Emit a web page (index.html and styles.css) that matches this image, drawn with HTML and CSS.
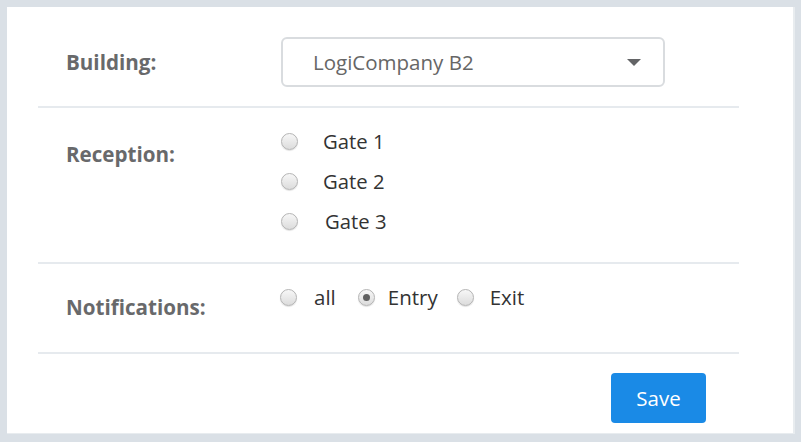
FILE: index.html
```html
<!DOCTYPE html>
<html>
<head>
<meta charset="utf-8">
<link rel="stylesheet" href="styles.css">
</head>
<body>
<div class="panel">
  <form class="form">
    <div class="row row-building">
      <div class="label">Building:</div>
      <div class="control">
        <div class="select">
          <span class="select-text">LogiCompany B2</span>
          <span class="caret"></span>
        </div>
      </div>
    </div>
    <div class="row row-reception">
      <div class="label">Reception:</div>
      <div class="control radios-col">
        <label class="radio-line"><span class="radio"></span><span class="rtext">Gate 1</span></label>
        <label class="radio-line"><span class="radio"></span><span class="rtext">Gate 2</span></label>
        <label class="radio-line"><span class="radio"></span><span class="rtext gate3">Gate 3</span></label>
      </div>
    </div>
    <div class="row row-notif">
      <div class="label">Notifications:</div>
      <div class="control radios-row">
        <label class="radio-inline r-all"><span class="radio"></span><span class="itext">all</span></label>
        <label class="radio-inline r-entry"><span class="radio checked"></span><span class="itext">Entry</span></label>
        <label class="radio-inline r-exit"><span class="radio"></span><span class="itext">Exit</span></label>
      </div>
    </div>
    <div class="footer">
      <button type="button" class="btn-save">Save</button>
    </div>
  </form>
</div>
</body>
</html>
```

FILE: styles.css
```css
html, body {
  margin: 0;
  padding: 0;
}
body {
  background: #dae0e6;
  font-family: "Open Sans", "Noto Sans", sans-serif;
  width: 801px;
  height: 442px;
  padding: 7px 6px 0 7px;
  box-sizing: border-box;
}
.panel {
  background: #fff;
  height: 427px;
  box-sizing: border-box;
  border-right: 2px solid #e8ecef;
  border-bottom: 1px solid #e8ecef;
  padding: 0 54px 0 31px;
}
.row {
  display: grid;
  grid-template-columns: 243px 1fr;
  border-bottom: 2px solid #e6eaee;
}
.label {
  font-weight: 700;
  font-size: 20.6px;
  line-height: 24px;
  color: #68696b;
  padding-left: 28px;
}
.row-building {
  height: 101px;
  box-sizing: border-box;
  padding-top: 30px;
}
.row-building .label {
  padding-top: 13px;
}
.select {
  width: 384px;
  height: 50px;
  box-sizing: border-box;
  border: 2px solid #d9dcdf;
  border-radius: 6px;
  display: flex;
  align-items: center;
  justify-content: space-between;
  padding: 0 22px 0 30px;
}
.select-text {
  font-size: 20.5px;
  color: #666;
}
.caret {
  width: 0;
  height: 0;
  border-left: 7px solid transparent;
  border-right: 7px solid transparent;
  border-top: 7px solid #636466;
}
.row-reception {
  height: 156px;
  box-sizing: border-box;
  padding-top: 13px;
}
.row-reception .label {
  padding-top: 21px;
}
.radios-col {
  display: flex;
  flex-direction: column;
}
.radio-line {
  display: flex;
  align-items: center;
  height: 40px;
}
.radio {
  width: 17px;
  height: 17px;
  box-sizing: border-box;
  border-radius: 50%;
  border: 1px solid #b4b4b4;
  background: linear-gradient(#f7f7f7, #dcdcdc);
  box-shadow: 0 1px 1px rgba(0,0,0,0.12);
  position: relative;
  flex: none;
}
.radio.checked::after {
  content: "";
  position: absolute;
  left: 4px;
  top: 4px;
  width: 7px;
  height: 7px;
  border-radius: 50%;
  background: #5f5f5f;
}
.rtext {
  font-size: 20.3px;
  color: #333;
  margin-left: 25px;
}
.rtext.gate3 {
  margin-left: 27px;
}
.row-notif {
  height: 90px;
  box-sizing: border-box;
  padding-top: 13px;
}
.row-notif .label {
  padding-top: 18px;
}
.radios-row {
  display: flex;
  align-items: center;
  height: 40px;
}
.radio-inline {
  display: flex;
  align-items: center;
}
.r-all .radio {
  margin-left: -1px;
}
.itext {
  font-size: 20.5px;
  color: #333;
}
.r-all .itext {
  margin-left: 17px;
}
.r-entry {
  margin-left: 22px;
}
.r-entry .itext {
  margin-left: 13px;
}
.r-exit {
  margin-left: 19px;
}
.r-exit .itext {
  margin-left: 16px;
}
.footer {
  display: flex;
  justify-content: flex-end;
  padding-top: 19px;
  padding-right: 33px;
}
.btn-save {
  width: 95px;
  height: 50px;
  border: none;
  border-radius: 4px;
  background: #1a8ae6;
  color: #fff;
  font-family: "Open Sans", "Noto Sans", sans-serif;
  font-size: 20.5px;
  padding: 0;
}
```
